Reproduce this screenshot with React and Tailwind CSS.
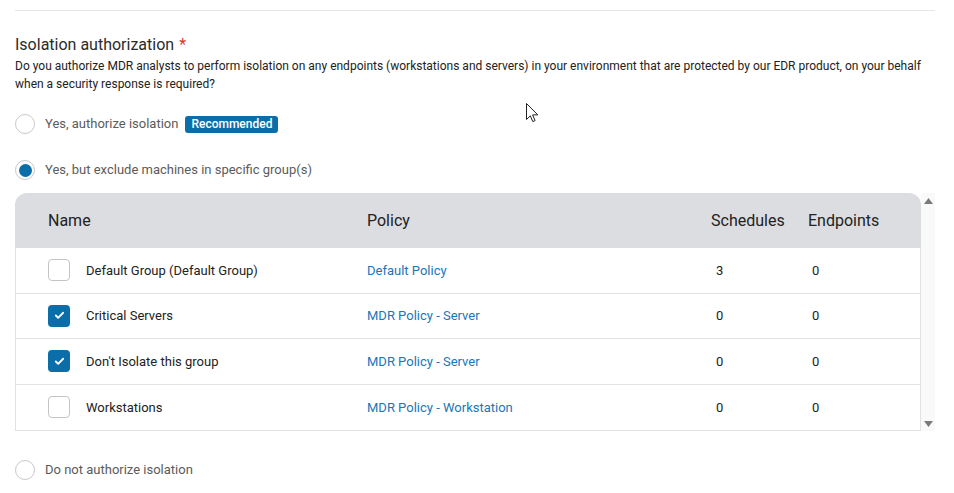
import { Check } from "lucide-react";

const groups = [
  { name: "Default Group (Default Group)", policy: "Default Policy", schedules: 3, endpoints: 0, checked: false },
  { name: "Critical Servers", policy: "MDR Policy - Server", schedules: 0, endpoints: 0, checked: true },
  { name: "Don't Isolate this group", policy: "MDR Policy - Server", schedules: 0, endpoints: 0, checked: true },
  { name: "Workstations", policy: "MDR Policy - Workstation", schedules: 0, endpoints: 0, checked: false },
];

function Radio({ selected, children }) {
  return (
    <div className="flex items-center h-[20px]">
      <span className="w-[20px] h-[20px] rounded-full border border-[#c9c9c9] flex items-center justify-center bg-white">
        {selected && <span className="w-[13px] h-[13px] rounded-full bg-[#0b6ea8]" />}
      </span>
      <span className="ml-[10px] text-[13px] text-[#5b5b5b]">{children}</span>
    </div>
  );
}

function CheckBox({ checked }) {
  if (checked) {
    return (
      <span className="w-[22px] h-[22px] rounded-[4px] bg-[#0b6ea8] flex items-center justify-center">
        <Check size={11} strokeWidth={4} color="white" />
      </span>
    );
  }
  return <span className="w-[22px] h-[22px] rounded-[4px] border border-[#c4c4c4] bg-white" />;
}

export default function App() {
  return (
    <div className="relative w-[954px] h-[493px] bg-white px-[15px] pt-[10px] font-['Roboto',sans-serif] text-[#222]">
      <div className="w-[920px] border-t border-[#e6e6e6]" />

      <div className="mt-[24px] h-[20px] flex items-center text-[16px] text-[#2b2b2b]">
        Isolation authorization<span className="ml-[5px] text-[#d33a32]">*</span>
      </div>
      <p className="mt-[2px] text-[12px] leading-[18px] text-[#222] w-[920px]">
        Do you authorize MDR analysts to perform isolation on any endpoints (workstations and servers) in your environment that are protected by our EDR product, on your behalf when a security response is required?
      </p>

      <div className="mt-[21px]">
        <Radio>
          <span className="flex items-center">
            Yes, authorize isolation
            <span className="ml-[7px] h-[17px] px-[6px] rounded-[3px] bg-[#0b6ea8] text-white text-[12px] font-medium leading-[17px]">
              Recommended
            </span>
          </span>
        </Radio>
      </div>

      <div className="mt-[26px]">
        <Radio selected>Yes, but exclude machines in specific group(s)</Radio>
      </div>

      <div className="mt-[13px] flex w-[920px]">
        <div className="flex-1 border-b border-[#e2e2e2]">
          <div className="h-[55px] rounded-tl-[12px] rounded-tr-[12px] bg-[#dcdde0] grid grid-cols-[319px_344px_97px_1fr] items-center pl-[33px] text-[16px] text-[#222]">
            <span>Name</span>
            <span>Policy</span>
            <span>Schedules</span>
            <span>Endpoints</span>
          </div>
          {groups.map((g, i) => (
            <div
              key={g.name}
              className={`h-[45.5px] grid grid-cols-[319px_344px_97px_1fr] items-center pl-[32px] text-[13px] border-l border-r border-[#e2e2e2] ${i < groups.length - 1 ? "border-b" : ""}`}
            >
              <span className="flex items-center">
                <CheckBox checked={g.checked} />
                <span className="ml-[16px]">{g.name}</span>
              </span>
              <span className="text-[#1a76b9]">{g.policy}</span>
              <span className="pl-[5px]">{g.schedules}</span>
              <span className="pl-[4px]">{g.endpoints}</span>
            </div>
          ))}
        </div>
        <div className="w-[14px] bg-[#f9f9f9] flex flex-col items-center justify-between pt-[5px] pb-[4px]">
          <svg width="9" height="6" viewBox="0 0 9 6"><path d="M4.5 0L9 6H0z" fill="#7a7a7a" /></svg>
          <svg width="9" height="6" viewBox="0 0 9 6"><path d="M0 0h9L4.5 6z" fill="#7a7a7a" /></svg>
        </div>
      </div>

      <div className="mt-[29px]">
        <Radio>Do not authorize isolation</Radio>
      </div>

      <svg className="absolute left-[526px] top-[103px]" width="13" height="20" viewBox="0 0 13 20">
        <path d="M0.5 0.5V16.5L4.3 12.8L6.8 18.6L9.1 17.6L6.6 11.9H11.8Z" fill="white" stroke="#222" strokeWidth="1" strokeLinejoin="round" />
      </svg>
    </div>
  );
}
